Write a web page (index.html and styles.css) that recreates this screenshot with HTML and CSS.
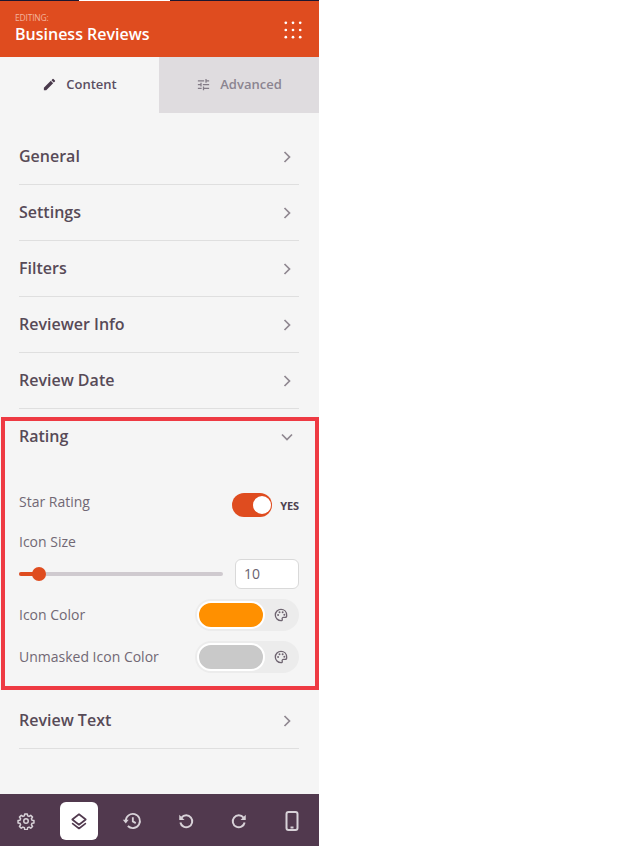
FILE: index.html
```html
<!DOCTYPE html>
<html lang="en">
<head>
<meta charset="utf-8">
<title>Business Reviews</title>
<link rel="stylesheet" href="styles.css">
</head>
<body>
<aside class="panel">
  <div class="topstrip"><span class="topstrip-active"></span></div>
  <header class="head">
    <div class="head-text">
      <div class="editing">EDITING:</div>
      <div class="title">Business Reviews</div>
    </div>
    <svg class="dots" width="20" height="20" viewBox="0 0 20 20" fill="#fff"><circle cx="2" cy="2" r="1.5"/><circle cx="10" cy="2" r="1.5"/><circle cx="18" cy="2" r="1.5"/><circle cx="2" cy="10" r="1.5"/><circle cx="10" cy="10" r="1.5"/><circle cx="18" cy="10" r="1.5"/><circle cx="2" cy="18" r="1.5"/><circle cx="10" cy="18" r="1.5"/><circle cx="18" cy="18" r="1.5"/></svg>
  </header>
  <nav class="tabs">
    <div class="tab tab-on">
      <svg width="15" height="15" viewBox="0 0 24 24" fill="#4a3a4c"><path d="M3 17.25V21h3.750L17.810 9.940l-3.750-3.750L3 17.250zM20.710 7.040a1 1 0 0 0 0-1.410l-2.340-2.340a1 1 0 0 0-1.410 0l-1.830 1.830 3.750 3.750 1.830-1.830z"/></svg>
      <span>Content</span>
    </div>
    <div class="tab tab-off">
      <svg width="15" height="15" viewBox="0 0 24 24" fill="#837b86"><path d="M3 17v2h6v-2H3zM3 5v2h10V5H3zm10 16v-2h8v-2h-8v-2h-2v6h2zM7 9v2H3v2h4v2h2V9H7zm14 4v-2H11v2h10zm-6-4h2V7h4V5h-4V3h-2v6z"/></svg>
      <span>Advanced</span>
    </div>
  </nav>
  <main class="list">
    <div class="row"><span>General</span><svg class="chev" width="10" height="14" viewBox="0 0 10 14"><path d="M2.500 2 7.500 7 2.500 12"/></svg></div>
    <div class="row"><span>Settings</span><svg class="chev" width="10" height="14" viewBox="0 0 10 14"><path d="M2.500 2 7.500 7 2.500 12"/></svg></div>
    <div class="row"><span>Filters</span><svg class="chev" width="10" height="14" viewBox="0 0 10 14"><path d="M2.500 2 7.500 7 2.500 12"/></svg></div>
    <div class="row"><span>Reviewer Info</span><svg class="chev" width="10" height="14" viewBox="0 0 10 14"><path d="M2.500 2 7.500 7 2.500 12"/></svg></div>
    <div class="row"><span>Review Date</span><svg class="chev" width="10" height="14" viewBox="0 0 10 14"><path d="M2.500 2 7.500 7 2.500 12"/></svg></div>
    <section class="open">
      <div class="row row-open"><span>Rating</span><svg class="chev" width="14" height="10" viewBox="0 0 14 10"><path d="M2 2.500 7 7.500 12 2.500"/></svg></div>
      <div class="field field-star">
        <label>Star Rating</label>
        <div class="toggle-wrap"><span class="toggle"><span class="knob"></span></span><b>YES</b></div>
      </div>
      <label class="size-label">Icon Size</label>
      <div class="slider-row">
        <div class="slider"><span class="slider-fill"></span><span class="slider-thumb"></span></div>
        <div class="num">10</div>
      </div>
      <div class="field field-color">
        <label>Icon Color</label>
        <div class="color"><span class="swatch swatch-orange"></span><svg class="palette" width="14" height="14" viewBox="0 0 16 16"><use href="#pal"/></svg></div>
      </div>
      <div class="field field-color">
        <label>Unmasked Icon Color</label>
        <div class="color"><span class="swatch swatch-grey"></span><svg class="palette" width="14" height="14" viewBox="0 0 16 16"><use href="#pal"/></svg></div>
      </div>
    </section>
    <div class="row"><span>Review Text</span><svg class="chev" width="10" height="14" viewBox="0 0 10 14"><path d="M2.500 2 7.500 7 2.500 12"/></svg></div>
  </main>
  <footer class="bar">
    <span class="btn"><svg width="18" height="18" viewBox="0 0 24 24" fill="none" stroke="#d8d2d8" stroke-width="2" stroke-linejoin="round"><circle cx="12" cy="12" r="3"/><path d="M10.300 2.500h3.400l.5 2.600 1.900.8 2.200-1.500 2.400 2.400-1.500 2.200.8 1.900 2.600.5v3.200l-2.600.5-.8 1.900 1.500 2.200-2.400 2.400-2.200-1.500-1.900.8-.5 2.600h-3.400l-.5-2.600-1.900-.8-2.200 1.500-2.400-2.400 1.500-2.200-.8-1.900-2.600-.5v-3.200l2.600-.5.8-1.900-1.500-2.200 2.400-2.400 2.200 1.500 1.900-.8z"/></svg></span>
    <span class="btn btn-on"><svg width="18" height="18" viewBox="0 0 24 24" fill="none" stroke="#51394e" stroke-width="2.200" stroke-linejoin="round" stroke-linecap="round"><path d="M12 3 21 10 12 17 3 10z"/><path d="M3.500 15.500 12 22l8.500-6.500"/></svg></span>
    <span class="btn"><svg width="20" height="20" viewBox="0 0 24 24" fill="none" stroke="#d8d2d8" stroke-width="2.200"><path d="M4.500 12a8.500 8.500 0 1 1 2.500 6"/><path d="M1 10.500h7L4.500 15z" fill="#d8d2d8" stroke="none"/><path d="M13 7.500V12.500L16.500 14.500"/></svg></span>
    <span class="btn"><svg width="18" height="18" viewBox="0 0 24 24" fill="none" stroke="#d8d2d8" stroke-width="2.600"><path d="M6 7.500A8 8 0 1 1 4.500 14"/><path d="M3 3.500V10.500H10z" fill="#d8d2d8" stroke="none"/></svg></span>
    <span class="btn"><svg width="18" height="18" viewBox="0 0 24 24" fill="none" stroke="#d8d2d8" stroke-width="2.600"><path d="M18 7.500A8 8 0 1 0 19.500 14"/><path d="M21 3.500V10.500H14z" fill="#d8d2d8" stroke="none"/></svg></span>
    <span class="btn"><svg width="14" height="20" viewBox="0 0 14 20" fill="none" stroke="#d8d2d8" stroke-width="2"><rect x="1.500" y="1" width="11" height="18" rx="2"/><path d="M5.500 16.500h3"/></svg></span>
  </footer>
</aside>
<div class="highlight"></div>
<svg class="defs" width="0" height="0"><symbol id="pal" viewBox="0 0 16 16"><path d="M8 1.500a6.500 6.500 0 1 0 0 13c1.200 0 1.700-.8 1.400-1.700-.4-1 .2-2 1.300-2h2c1 0 1.800-.8 1.800-2.300C14.500 4.300 11.600 1.500 8 1.500z" fill="none" stroke="#6e6470" stroke-width="1.500"/><circle cx="4.700" cy="8" r="1.100" fill="#6e6470"/><circle cx="6.300" cy="4.900" r="1.100" fill="#6e6470"/><circle cx="9.900" cy="4.900" r="1.100" fill="#6e6470"/><circle cx="11.800" cy="7.700" r="1.100" fill="#6e6470"/></symbol></svg>
</body>
</html>
```
FILE: styles.css
```css
* { box-sizing: border-box; }
html, body { margin: 0; padding: 0; background: #fff; }
body { font-family: "Open Sans", sans-serif; color: #50404f; }
.panel { width: 319px; height: 846px; background: #f5f5f5; display: flex; flex-direction: column; }
.topstrip { height: 1px; background: #1c1630; padding-left: 79px; flex: none; }
.topstrip-active { display: block; width: 91px; height: 1px; background: #fff; }
.head { height: 56px; flex: none; background: #df4c1f; color: #fff; display: flex; justify-content: space-between; align-items: center; padding: 0 17px 0 15px; }
.head-text { margin-top: -1px; }
.editing { font-size: 8.5px; line-height: 10px; color: #f3b49e; margin-bottom: 1px; letter-spacing: -0.2px; }
.title { font-size: 16px; line-height: 20px; font-weight: 600; }
.dots { display: block; width: 18px; height: 18px; margin-top: 2px; }
.tabs { display: flex; height: 56px; flex: none; }
.tab { display: flex; align-items: center; justify-content: center; gap: 9px; font-size: 13px; font-weight: 600; padding-bottom: 2px; }
.tab-on { width: 159px; color: #5a4e62; }
.tab-off { width: 160px; background: #dfdcdf; color: #8b8490; }
.list { padding: 16px 20px 0 19px; flex: 1; }
.row { height: 56px; display: flex; justify-content: space-between; align-items: center; border-bottom: 1px solid #dfdfdf; font-size: 16px; font-weight: 600; color: #574a57; padding: 0 7px 0 0; }
.row span { margin-top: -2px; }
.row-open { border-bottom: 0; }
.row-open .chev { margin-right: -2px; margin-top: -1px; }
.chev { fill: none; stroke: #8f8790; stroke-width: 1.7; display: block; }
.open { height: 284px; }
.field { display: flex; justify-content: space-between; align-items: center; }
label { font-size: 14px; color: #716874; display: block; }
.field label { margin-top: -2px; }
.field-star { margin-top: 24px; height: 26px; }
.toggle-wrap { display: flex; align-items: center; gap: 8px; margin-top: 5px; }
.toggle-wrap b { font-size: 11px; font-weight: 700; color: #4e4250; letter-spacing: -0.1px; margin-top: 1px; }
.toggle { width: 40px; height: 24px; border-radius: 12px; background: #df4c1f; display: flex; justify-content: flex-end; align-items: center; padding-right: 1px; }
.knob { width: 18px; height: 18px; background: #fff; border-radius: 50%; }
.size-label { margin-top: 17px; line-height: 20px; }
.slider-row { display: flex; justify-content: space-between; align-items: center; margin-top: 7px; }
.slider { position: relative; width: 204px; height: 4px; border-radius: 2px; background: #cfcacf; }
.slider-fill { position: absolute; left: 0; top: 0; width: 20px; height: 4px; border-radius: 2px; background: #df4c1f; }
.slider-thumb { position: absolute; left: 13px; top: -5px; width: 14px; height: 14px; border-radius: 50%; background: #df4c1f; }
.num { width: 64px; height: 30px; background: #fff; border: 1px solid #d9d9d9; border-radius: 6px; font-size: 14px; line-height: 28px; padding-left: 8px; color: #6a6270; }
.field-color { height: 32px; margin-top: 10px; }
.color { width: 104px; height: 32px; border-radius: 16px; background: #ececec; display: flex; align-items: center; gap: 9px; padding-left: 2px; }
.swatch { border: 2px solid #fff; border-radius: 15px; box-sizing: content-box; width: 64px; height: 24px; flex: none; }
.swatch-orange { background: #ff9000; }
.swatch-grey { background: #c9c9c9; }
.palette { display: block; }
.bar { height: 52px; flex: none; background: #51394e; display: flex; justify-content: space-between; align-items: center; padding: 2px 8px 0 7px; }
.btn { width: 38px; height: 38px; border-radius: 6px; display: flex; align-items: center; justify-content: center; }
.btn-on { background: #fff; }
.highlight { position: absolute; left: 1px; top: 417px; width: 318px; height: 273px; border: 4px solid #ee3a43; pointer-events: none; }
.defs { position: absolute; }
```
